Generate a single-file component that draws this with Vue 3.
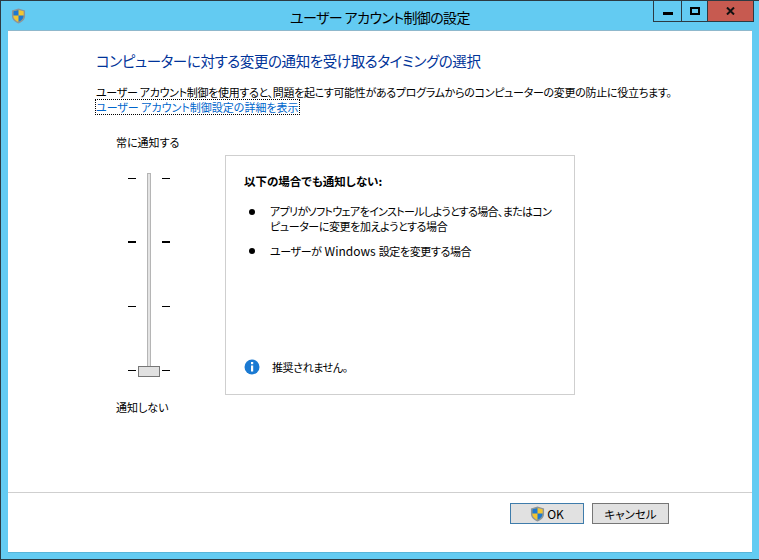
<script setup>
const ticks = [false, true, false, false]
</script>

<template>
  <div class="window">
    <header class="titlebar">
      <svg class="shield title-shield" width="15" height="16" viewBox="0 0 16 17">
        <path d="M8 .5 L15 2.500 V8.500 C15 12.500 11.500 15 8 16.500 C4.500 15 1 12.500 1 8.500 V2.500 Z" fill="#8d9499" />
        <path d="M8 2 L13.500 3.500 V8.500 C13.500 11.500 11 13.500 8 15 C5 13.500 2.500 11.500 2.500 8.500 V3.500 Z" fill="#f2c531" />
        <path d="M8 2 V8 H2.500 V3.500 Z M8 8 H13.500 V8.500 C13.500 11.500 11 13.500 8 15 Z" fill="#1e78d2" />
      </svg>
      <div class="title">ユーザー アカウント制御の設定</div>
      <div class="controls">
        <div class="ctl ctl-min"><i></i></div>
        <div class="ctl ctl-max"><i></i></div>
        <div class="ctl ctl-close">
          <svg width="9" height="8" viewBox="0 0 9 8"><path d="M1 0.500 L8 7.500 M8 0.500 L1 7.500" stroke="#111" stroke-width="2" fill="none" /></svg>
        </div>
      </div>
    </header>

    <main class="panel">
      <section class="body">
        <h1 class="heading">コンピューターに対する変更の通知を受け取るタイミングの選択</h1>
        <p class="intro">ユーザー アカウント制御を使用すると、問題を起こす可能性があるプログラムからのコンピューターの変更の防止に役立ちます。</p>
        <a class="link">ユーザー アカウント制御設定の詳細を表示</a>

        <div class="columns">
          <div class="slider">
            <div class="slider-top">常に通知する</div>
            <div class="track-area">
              <div class="track"></div>
              <div class="tick-rows">
                <div v-for="(bold, i) in ticks" :key="i" class="tick-row" :class="{ bold }">
                  <i></i><i></i>
                </div>
              </div>
              <div class="thumb"></div>
            </div>
            <div class="slider-bottom">通知しない</div>
          </div>

          <div class="info">
            <div class="info-title">以下の場合でも通知しない:</div>
            <ul class="info-list">
              <li><i class="dot"></i><div><span class="tight">アプリがソフトウェアをインストールしようとする場合、またはコン</span><br>ピューターに変更を加えようとする場合</div></li>
              <li><i class="dot"></i><div>ユーザーが <span class="latin">Windows</span> 設定を変更する場合</div></li>
            </ul>
            <div class="note">
              <svg width="16" height="16" viewBox="0 0 16 16">
                <circle cx="8" cy="8" r="7.500" fill="#1b7ad2" />
                <rect x="7" y="3" width="2.200" height="2.200" fill="#fff" />
                <rect x="7" y="6.500" width="2.200" height="6" fill="#fff" />
              </svg>
              <span>推奨されません。</span>
            </div>
          </div>
        </div>
      </section>

      <footer class="footer">
        <button class="btn btn-ok">
          <svg class="shield" width="15" height="16" viewBox="0 0 16 17">
            <path d="M8 .5 L15 2.500 V8.500 C15 12.500 11.500 15 8 16.500 C4.500 15 1 12.500 1 8.500 V2.500 Z" fill="#8d9499" />
            <path d="M8 2 L13.500 3.500 V8.500 C13.500 11.500 11 13.500 8 15 C5 13.500 2.500 11.500 2.500 8.500 V3.500 Z" fill="#f2c531" />
            <path d="M8 2 V8 H2.500 V3.500 Z M8 8 H13.500 V8.500 C13.500 11.500 11 13.500 8 15 Z" fill="#1e78d2" />
          </svg>
          <span class="ok-label">OK</span>
        </button>
        <button class="btn btn-cancel">キャンセル</button>
      </footer>
    </main>
  </div>
</template>

<style>
html, body { margin: 0; padding: 0; background: #63cbf2; }
</style>

<style scoped>
.window {
  width: 759px;
  height: 560px;
  box-sizing: border-box;
  border: 1px solid #2c3a42;
  border-right-width: 0;
  background: #63cbf2;
  display: flex;
  flex-direction: column;
  font-family: "Noto Sans CJK JP", "Noto Sans", sans-serif;
  font-size: 11px;
  font-feature-settings: "palt" 1;
  color: #000;
  overflow: hidden;
}
.titlebar {
  height: 30px;
  flex: none;
  position: relative;
  display: flex;
  align-items: flex-start;
}
.title-shield { margin: 7px 0 0 10px; }
.title {
  position: absolute;
  left: 0;
  right: 0;
  top: 6px;
  text-align: center;
  font-size: 14px;
  line-height: 20px;
  letter-spacing: -0.6px;
}
.controls {
  margin-left: auto;
  margin-right: 5px;
  display: flex;
  height: 21px;
  box-sizing: border-box;
  border: 1px solid #2c3a42;
  border-top: 0;
}
.ctl { display: flex; align-items: center; justify-content: center; }
.ctl-min { width: 27px; border-right: 1px solid #2c3a42; }
.ctl-min i { width: 10px; height: 3px; background: #000; margin-top: 4px; }
.ctl-max { width: 25px; border-right: 1px solid #2c3a42; }
.ctl-max i { width: 6px; height: 4px; border: 2px solid #000; }
.ctl-close { flex: 1; width: 45px; background: #c75a50; }
.panel {
  flex: 1;
  margin: 0 7px 7px 7px;
  background: #fff;
  box-shadow: 0 -1px 0 #8fb8cc, 0 1px 0 #58b5d9;
  display: flex;
  flex-direction: column;
}
.body { flex: 1; padding: 19px 0 0 88px; }
.heading {
  margin: 0;
  font-size: 14.500px;
  font-weight: 400;
  line-height: 22px;
  letter-spacing: -0.4px;
  color: #003399;
  white-space: nowrap;
}
.intro {
  margin: 13px 0 0;
  line-height: 14px;
  letter-spacing: -0.3px;
  white-space: nowrap;
}
.link {
  display: block;
  width: fit-content;
  margin-top: 1px;
  line-height: 14px;
  color: #0066cc;
  outline: 1px dotted #000;
  white-space: nowrap;
}
.columns { display: flex; margin-top: 20px; }
.slider { width: 129px; flex: none; }
.slider-top { margin-left: 20px; line-height: 16px; }
.slider-bottom { margin-left: 20px; line-height: 16px; }
.track-area { position: relative; height: 226px; margin-top: 23px; }
.track {
  position: absolute;
  left: 51px;
  top: 0;
  width: 2px;
  height: 193px;
  border: 1px solid #b5b5b5;
  background: #e4e4e4;
}
.tick-rows {
  padding-top: 5px;
  display: flex;
  flex-direction: column;
  gap: 63px;
  margin-left: 32px;
}
.tick-row { display: flex; justify-content: space-between; width: 42px; height: 1px; align-items: flex-start; }
.tick-row i { width: 8px; height: 1px; background: #000; }
.tick-row.bold i { height: 2px; margin-top: -1px; }
.thumb {
  position: absolute;
  left: 42px;
  top: 193px;
  width: 20px;
  height: 9px;
  border: 1px solid #767676;
  background: #e1e1e1;
}
.info {
  width: 350px;
  height: 240px;
  box-sizing: border-box;
  border: 1px solid #cfcfcf;
  padding: 17px 18px 0 18px;
  display: flex;
  flex-direction: column;
  margin-top: 21px;
}
.info-title { font-size: 11.500px; font-weight: 700; line-height: 16px; }
.info-list { margin: 15px 0 0; padding: 0 0 0 5px; list-style: none; line-height: 15px; letter-spacing: -0.4px; white-space: nowrap; }
.info-list li { display: flex; gap: 15px; margin-bottom: 9px; }
.tight { letter-spacing: -0.65px; }
.dot { flex: none; width: 6px; height: 6px; margin-top: 5px; border-radius: 50%; background: #000; }
.latin { font-size: 12px; letter-spacing: 0; margin: 0 1px; }
.note { margin-top: auto; margin-bottom: 19px; display: flex; align-items: center; gap: 12px; letter-spacing: -0.4px; }
.footer {
  height: 60px;
  flex: none;
  border-top: 1px solid #cfcfcf;
  display: flex;
  justify-content: flex-end;
  gap: 8px;
  padding: 10px 83px 0 0;
  box-sizing: border-box;
}
.btn {
  width: 74px;
  height: 21px;
  padding: 0;
  background: #e1e1e1;
  border: 1px solid #767676;
  font: inherit;
  font-size: 11.500px;
  font-feature-settings: inherit;
  color: #000;
  display: flex;
  align-items: center;
  justify-content: center;
  gap: 2px;
}
.btn-ok { border-color: #3f7cab; }
.ok-label { font-size: 12px; }
.btn-cancel { width: 77px; }
</style>
